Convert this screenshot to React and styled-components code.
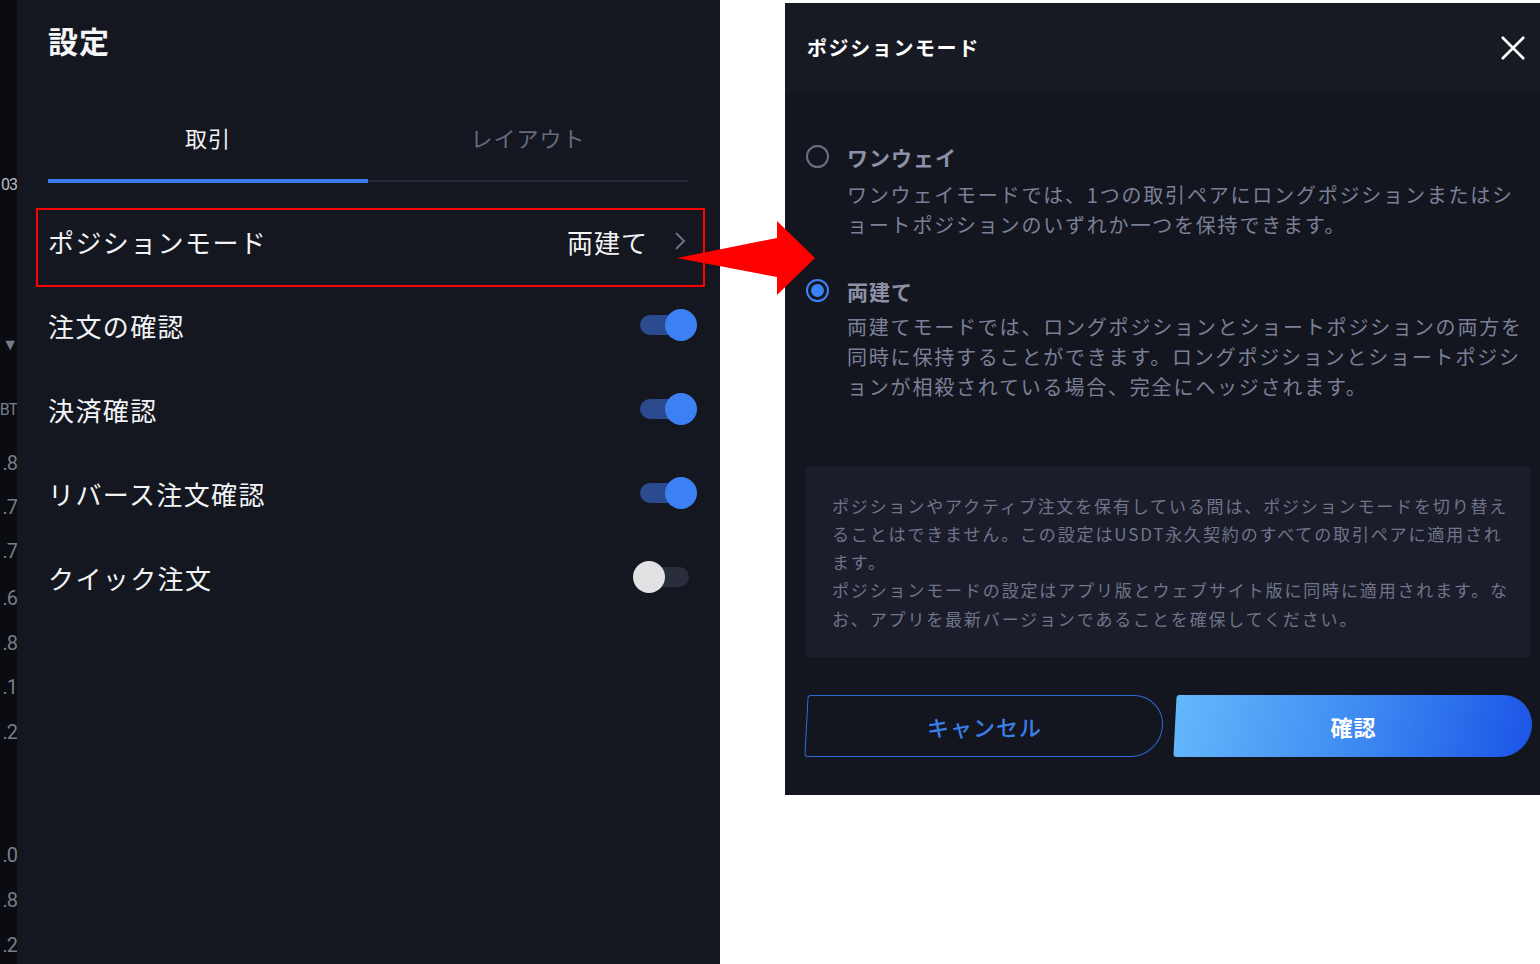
import React from 'react'
import styled, { createGlobalStyle } from 'styled-components'

const GlobalStyle = createGlobalStyle`
  html, body {
    margin: 0;
    padding: 0;
    background: #ffffff;
  }
  body {
    font-family: "Noto Sans CJK JP", "Noto Sans", sans-serif;
  }
  * { box-sizing: border-box; }
`

const Page = styled.div`
  position: relative;
  display: flex;
  align-items: flex-start;
  width: 1540px;
  height: 964px;
  overflow: hidden;
  background: #ffffff;
`

/* chart axis peeking out behind the settings panel */
const AxisStrip = styled.div`
  position: relative;
  flex: 0 0 17px;
  height: 964px;
  overflow: hidden;
  background: #0b0c11;
`

const AxisLabel = styled.span`
  position: absolute;
  right: 0;
  top: ${p => p.$y - 12}px;
  font-family: Roboto, "Liberation Sans", sans-serif;
  font-size: ${p => p.$small ? 16 : 20}px;
  line-height: 24px;
  letter-spacing: -1px;
  white-space: nowrap;
  color: ${p => p.$bright ? '#b9bcc5' : '#7a7d86'};
`

const Panel = styled.div`
  flex: 0 0 703px;
  height: 964px;
  background: #141720;
  padding: 21px 23px 0 31px;
`

const PanelTitle = styled.h1`
  margin: 0;
  font-size: 30px;
  line-height: 38px;
  font-weight: 700;
  color: #f4f5f7;
  letter-spacing: 1px;
`

const TabBar = styled.div`
  display: flex;
  margin: 63px 9px 0 0;
  border-bottom: 2px solid #252937;
`

const Tab = styled.div`
  flex: 1;
  text-align: center;
  font-size: 22px;
  line-height: 30px;
  padding-bottom: 27px;
  margin-bottom: -3px;
  letter-spacing: 1px;
  color: ${p => p.$active ? '#f2f3f5' : '#646a80'};
  border-bottom: 4px solid ${p => p.$active ? '#3a7cf0' : 'transparent'};
`

const SettingList = styled.div`
  margin-top: 17px;
`

const SettingRow = styled.div`
  position: relative;
  display: flex;
  align-items: center;
  justify-content: space-between;
  height: 84px;
`

const Highlight = styled.span`
  position: absolute;
  top: 9px;
  bottom: -4px;
  left: -12px;
  right: -8px;
  border: 2px solid #ff0000;
  pointer-events: none;
`

const RowLabel = styled.span`
  font-size: 26px;
  letter-spacing: 1.4px;
  color: #f2f3f5;
`

const RowValue = styled.span`
  display: flex;
  align-items: center;
  gap: 26px;
  padding-right: 11px;
  font-size: 26px;
  letter-spacing: 1px;
  color: #f2f3f5;
`

const Toggle = styled.span`
  position: relative;
  width: 57px;
  height: 32px;
  margin-right: ${p => p.$on ? 0 : 7}px;

  &::before {
    content: '';
    position: absolute;
    top: 6px;
    left: ${p => p.$on ? 0 : 6}px;
    width: 50px;
    height: 20px;
    border-radius: 10px;
    background: ${p => p.$on ? '#2c4a8e' : '#2a2d3c'};
  }
  &::after {
    content: '';
    position: absolute;
    top: 0;
    ${p => p.$on ? 'right: 0;' : 'left: 0;'}
    width: 32px;
    height: 32px;
    border-radius: 50%;
    background: ${p => p.$on ? '#3d80f4' : '#e2e2e4'};
  }
`

const Dialog = styled.div`
  display: flex;
  flex-direction: column;
  width: 755px;
  height: 792px;
  margin: 3px 0 0 65px;
  background: #13161f;
`

const DialogHeader = styled.div`
  display: flex;
  align-items: center;
  justify-content: space-between;
  height: 90px;
  padding: 0 14px 0 22px;
  background: #171a23;
`

const DialogTitle = styled.h2`
  margin: 0;
  font-size: 20px;
  font-weight: 700;
  letter-spacing: 1.6px;
  color: #ffffff;
`

const CloseButton = styled.button`
  display: flex;
  padding: 0;
  border: none;
  background: none;
`

const DialogBody = styled.div`
  display: flex;
  flex-direction: column;
  padding: 49px 8px 38px 21px;
`

const Option = styled.div`
  display: grid;
  grid-template-columns: 23px 1fr;
  column-gap: 18px;
  margin-top: ${p => p.$first ? 0 : 36}px;
`

const Radio = styled.span`
  align-self: center;
  display: grid;
  place-items: center;
  width: 23px;
  height: 23px;
  border-radius: 50%;
  border: 2px solid ${p => p.$checked ? '#3b82f6' : '#6a6f84'};

  &::after {
    content: '';
    width: 13px;
    height: 13px;
    border-radius: 50%;
    background: ${p => p.$checked ? '#3b82f6' : 'transparent'};
  }
`

const OptionLabel = styled.span`
  font-size: 21px;
  line-height: 30px;
  font-weight: 700;
  letter-spacing: 1px;
  color: #8d91a6;
`

const OptionDesc = styled.div`
  grid-column: 2;
  margin-top: ${p => p.$gap}px;
  font-size: 20px;
  line-height: 30px;
  letter-spacing: 1.8px;
  color: #7b8097;
  white-space: nowrap;
`

const InfoBox = styled.div`
  margin: 64px 2px 0 0;
  padding: 26px 20px 24px 26px;
  border-radius: 4px;
  background: #1b1e2a;
  font-size: 17px;
  line-height: 28.3px;
  letter-spacing: 1.85px;
  color: #6f748b;
  white-space: nowrap;
`

const ButtonRow = styled.div`
  display: flex;
  gap: 12px;
  margin-top: 38px;
`

const ActionButton = styled.button`
  position: relative;
  flex: 1;
  height: 62px;
  padding: 0;
  border: none;
  background: none;
  font-family: inherit;
  font-size: 22px;
  letter-spacing: 1px;
  font-weight: ${p => p.$primary ? 700 : 500};
  color: ${p => p.$primary ? '#ffffff' : '#3b7ee8'};

  &::before {
    content: '';
    position: absolute;
    inset: 0;
    border-radius: 3px 31px 31px 3px;
    transform: skewX(-3deg);
    background: ${p => p.$primary
      ? 'linear-gradient(100deg, #64b8fb 0%, #3f8cf2 50%, #1b54e6 100%)'
      : 'transparent'};
    border: ${p => p.$primary ? 'none' : '1.5px solid #2f6ad6'};
  }

  & > span {
    position: relative;
  }
`

const ArrowMark = styled.svg`
  position: absolute;
  left: 675px;
  top: 218px;
  pointer-events: none;
`

const axisLabels = [
  { t: '03', y: 185, bright: true, small: true },
  { t: '▼', y: 345, small: true },
  { t: 'BT', y: 410, small: true },
  { t: '.8', y: 463 },
  { t: '.7', y: 507 },
  { t: '.7', y: 551 },
  { t: '.6', y: 598 },
  { t: '.8', y: 643 },
  { t: '.1', y: 687 },
  { t: '.2', y: 732 },
  { t: '.0', y: 855 },
  { t: '.8', y: 900 },
  { t: '.2', y: 945 },
]

const settings = [
  { label: 'ポジションモード', value: '両建て', highlight: true },
  { label: '注文の確認', on: true },
  { label: '決済確認', on: true },
  { label: 'リバース注文確認', on: true },
  { label: 'クイック注文', on: false },
]

const modes = [
  {
    label: 'ワンウェイ',
    checked: false,
    lines: [
      'ワンウェイモードでは、1つの取引ペアにロングポジションまたはシ',
      'ョートポジションのいずれか一つを保持できます。',
    ],
  },
  {
    label: '両建て',
    checked: true,
    lines: [
      '両建てモードでは、ロングポジションとショートポジションの両方を',
      '同時に保持することができます。ロングポジションとショートポジシ',
      'ョンが相殺されている場合、完全にヘッジされます。',
    ],
  },
]

const notes = [
  'ポジションやアクティブ注文を保有している間は、ポジションモードを切り替え',
  'ることはできません。この設定はUSDT永久契約のすべての取引ペアに適用され',
  'ます。',
  'ポジションモードの設定はアプリ版とウェブサイト版に同時に適用されます。な',
  'お、アプリを最新バージョンであることを確保してください。',
]

function Chevron() {
  return (
    <svg width="12" height="20" viewBox="0 0 12 20">
      <path d="M2 2 L10 10 L2 18" fill="none" stroke="#6b7086" strokeWidth="2" />
    </svg>
  )
}

function App() {
  return (
    <Page>
      <GlobalStyle />
      <AxisStrip>
        {axisLabels.map((a, i) => (
          <AxisLabel key={i} $y={a.y} $bright={a.bright} $small={a.small}>{a.t}</AxisLabel>
        ))}
      </AxisStrip>

      <Panel>
        <PanelTitle>設定</PanelTitle>
        <TabBar>
          <Tab $active>取引</Tab>
          <Tab>レイアウト</Tab>
        </TabBar>
        <SettingList>
          {settings.map(s => (
            <SettingRow key={s.label}>
              <RowLabel>{s.label}</RowLabel>
              {s.value ? (
                <RowValue>{s.value}<Chevron /></RowValue>
              ) : (
                <Toggle $on={s.on} />
              )}
              {s.highlight && <Highlight />}
            </SettingRow>
          ))}
        </SettingList>
      </Panel>

      <Dialog>
        <DialogHeader>
          <DialogTitle>ポジションモード</DialogTitle>
          <CloseButton aria-label="close">
            <svg width="26" height="26" viewBox="0 0 26 26">
              <path d="M2 2 L24 24 M24 2 L2 24" stroke="#ffffff" strokeWidth="2.6" />
            </svg>
          </CloseButton>
        </DialogHeader>
        <DialogBody>
          {modes.map((m, i) => (
            <Option key={m.label} $first={i === 0}>
              <Radio $checked={m.checked} />
              <OptionLabel>{m.label}</OptionLabel>
              <OptionDesc $gap={i === 0 ? 8 : 6}>
                {m.lines.map(l => <div key={l}>{l}</div>)}
              </OptionDesc>
            </Option>
          ))}
          <InfoBox>
            {notes.map(n => <div key={n}>{n}</div>)}
          </InfoBox>
          <ButtonRow>
            <ActionButton><span>キャンセル</span></ActionButton>
            <ActionButton $primary><span>確認</span></ActionButton>
          </ButtonRow>
        </DialogBody>
      </Dialog>

      <ArrowMark width="145" height="80" viewBox="0 0 145 80">
        <polygon points="2,40 102,20 102,3 140,40 102,77 102,59" fill="#ff0000" />
      </ArrowMark>
    </Page>
  )
}

export default App
